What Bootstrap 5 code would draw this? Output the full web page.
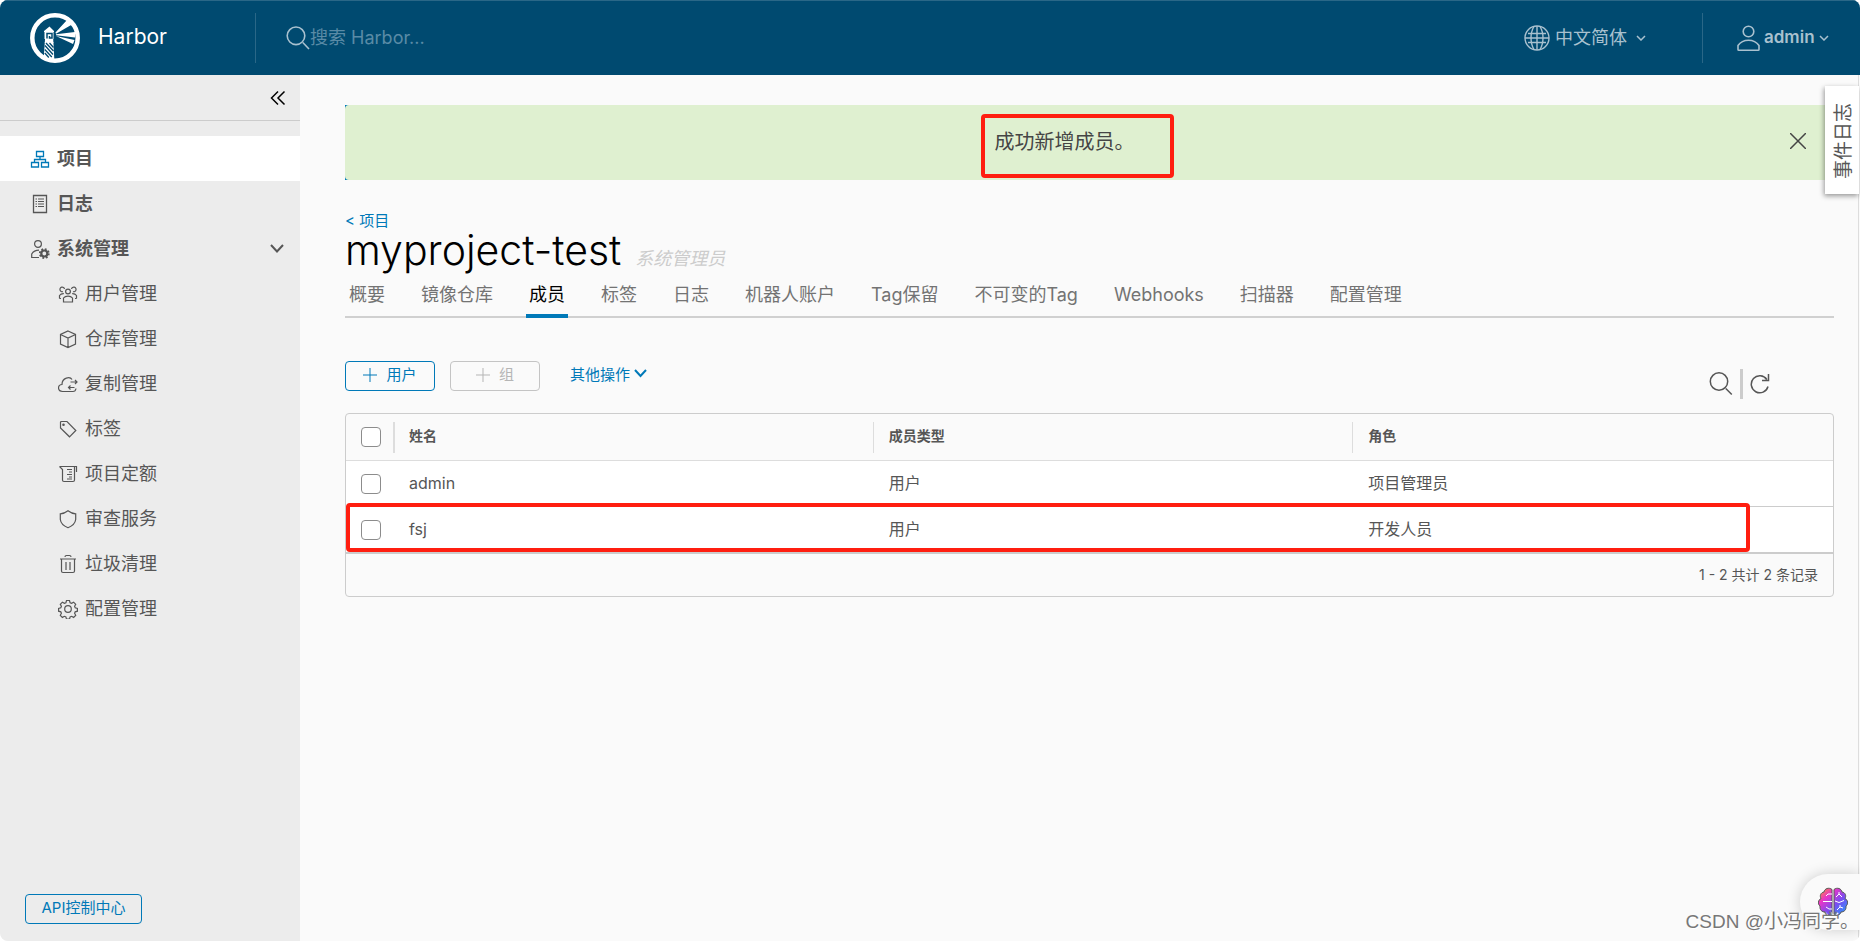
<!DOCTYPE html>
<html lang="zh-CN">
<head>
<meta charset="utf-8">
<meta name="viewport" content="width=device-width, initial-scale=1">
<title>Harbor</title>
<link href="https://cdn.jsdelivr.net/npm/bootstrap@5.3.0/dist/css/bootstrap.min.css" rel="stylesheet">
<style>
  :root { --hb-blue: #0079b8; --hb-navy: #004a70; --hb-text: #565656; --hb-line: #ccc; }
  html { background: #fff; }
  body { font-family: Inter, "Noto Sans CJK SC", sans-serif; font-size: 18px; font-weight: 400; line-height: 24px; color: var(--hb-text); background: transparent; }
  svg { display: block; flex: none; fill: none; stroke: currentColor; }
  button, input { font: inherit; color: inherit; }
  .shell { background: #fafafa; border-radius: 8px; overflow: hidden; }

  .topbar { height: 75px; background: var(--hb-navy); border-top: 1px solid #2a6787; color: #a9c1cf; }
  .brand { width: 255px; padding-left: 30px; gap: 18px; color: #fff; font-size: 21px; }
  .brand:hover { color: #fff; }
  .brand span, .who span { padding-bottom: 2px; }
  .rule { width: 1px; height: 50px; background: #2a6787; }
  .finder { padding-left: 30px; }
  .topbar input { background: none; border: 0; outline: 0; padding: 0; width: 240px; }
  .topbar input::placeholder { color: #5a8ba6; opacity: 1; }
  .plain { background: none; border: 0; padding: 0; }
  .lang { width: 178px; gap: 5px; }
  .who { width: 157px; gap: 4px; padding-left: 34px; font-size: 17px; font-weight: 600; }

  .sidebar { width: 300px; background: #ececec; }
  .fold { height: 46px; margin-bottom: 15px; padding-right: 14px; border-bottom: 1px solid var(--hb-line); color: #000; }
  .side-link { height: 45px; padding-left: 30px; gap: 7px; color: var(--hb-text); text-decoration: none; font-weight: 700; width: 100%; }
  .side-link.sub { padding-left: 58px; font-weight: 400; }
  .side-link.current { background: #fff; }
  .side-link.current svg { color: var(--hb-blue); }
  .side-link span { font-family: "Noto Sans CJK SC", sans-serif; padding-bottom: 3px; }

  .hb-btn { height: 30px; border: 1px solid var(--hb-blue); border-radius: 4px; color: var(--hb-blue); background: transparent; font-size: 15px; line-height: 20px; padding: 0 0 2px; }
  .hb-btn:disabled { color: #b5b5b5; border-color: #c4c4c4; opacity: 1; }
  .wide { width: 90px; gap: 9px; }
  .actions { gap: 15px; }
  .more { margin-left: 15px; gap: 4px; border: 0; }
  .api { width: 117px; margin: 0 25px 17px; }

  .content { padding: 30px 24px 0 45px; border-right: 1px solid #ddd; margin-right: 1px; }
  .notice { height: 75px; background: var(--hb-blue); }
  .notice-in { background: #dff0d0; border-radius: 4px; color: #454545; font-size: 20px; }
  .notice-text { padding-bottom: 2px; }
  .notice-text span { position: relative; }
  .marker { position: absolute; border: 4px solid #ff1e10; border-radius: 4px; pointer-events: none; }
  .notice-text .marker { left: -14px; top: -16px; width: 193px; height: 64px; }
  .close-x { width: 50px; padding: 0 0 4px 6px; }

  .crumb-row { margin-top: 31px; height: 19px; }
  .crumb { color: var(--hb-blue); text-decoration: none; font-size: 15px; line-height: 20px; }
  h1 { font-size: 41px; line-height: 40px; font-weight: 300; color: #000; margin: 0; }
  .title-row { gap: 14px; height: 44px; }
  .role-tag { font-style: italic; color: #ccc; }
  .tabs { gap: 30px; padding-left: 1px; border-bottom: 2px solid #d0d0d0; height: 44px; }
  .tabs a { color: #737373; text-decoration: none; padding: 9px 3px 0; margin-bottom: -2px; border-bottom: 4px solid transparent; white-space: nowrap; }
  .tabs a.current { color: #000; border-color: var(--hb-blue); }

  .toolbar { margin-top: 43px; height: 52px; }
  .tools { padding: 8px 64px 0 0; gap: 7px; }
  .bar { width: 3px; height: 30px; background: #ccc; }

  .grid { border: 1px solid var(--hb-line); border-radius: 4px; }
  .grid table { table-layout: fixed; width: 100%; border-collapse: separate; border-spacing: 0; font-size: 16px; }
  .grid th { height: 47px; padding: 0 0 3px 15px; font-size: 14px; font-weight: 700; border-bottom: 1px solid #ddd; position: relative; }
  .grid td { height: 46px; padding: 0 0 1px 15px; background: #fff; border-bottom: 1px solid var(--hb-line); }
  .grid th + th::before { content: ""; position: absolute; left: -1px; top: 8px; width: 1px; height: 31px; background: #ddd; }
  .grid th:nth-child(2)::before { width: 2px; }
  .grid .pick { width: 48px; padding: 0 0 0 15px; }
  .grid .form-check-input { display: block; width: 20px; height: 20px; margin: 0; border: 1px solid #8c8c8c; border-radius: 4px; background-color: #fff; }
  .row-marker { left: 0; right: 83px; bottom: 44px; height: 49px; }
  .foot { height: 43px; padding-right: 15px; border-top: 1px solid var(--hb-line); font-size: 14px; }

  .event-tab { position: absolute; right: 1px; top: 86px; width: 34px; height: 108px; background: #fff; border: 0; box-shadow: -1px 2px 5px rgba(0,0,0,.4); padding: 2px 0 0 4px; font-size: 19px; }
  .event-tab span { display: block; margin: auto; writing-mode: vertical-rl; text-orientation: sideways; transform: rotate(180deg); }
  .helper { position: absolute; right: 0; bottom: 11px; width: 60px; height: 56px; padding: 0 0 0 18px; border: 0; border-radius: 28px 0 0 28px; background: #fafafa; box-shadow: 0 0 14px rgba(0,0,0,.18); }
  .watermark { position: absolute; right: 1px; bottom: 6px; font: 400 19px/26px "Liberation Sans", "Noto Sans CJK SC", sans-serif; color: #777; text-shadow: 1px 1px 0 #fff; pointer-events: none; white-space: nowrap; }
</style>
</head>
<body>
<div class="shell position-relative d-flex flex-column min-vh-100">
  <header class="topbar d-flex align-items-center">
    <a class="brand d-flex align-items-center text-decoration-none" href="#">
      <svg width="50" height="50" viewBox="0 0 50 50">
        <circle cx="25" cy="25" r="22.700" stroke="#fff" stroke-width="4.500"/>
        <g fill="#fff" stroke="none">
          <path d="M19.500 13.500 24 18v1h-.5v7h-.3l.2 4h-8.600l.2-4h-.5v-7H14v-1z"/>
          <path d="M14.800 29h8.600l1 18.800-10.600-3.500z"/>
          <path d="M25.500 19.500 37 7l5 4.500L26 20.800zM26 21.300 45 19v5.500l-19-2.300zM26 23 44.500 27l-1.500 4z"/>
        </g>
        <path d="M17 25.500v-5h5v4.500h-2.500v-2" stroke="#004a70" stroke-width="1.500"/>
        <path d="m15 32.500 8 9M14.800 36.500l7 7.500M16 30l7.500 8M14.800 40l4 4.500M19.500 30l4 4.500" stroke="#004a70" stroke-width="1.300"/>
      </svg>
      <span>Harbor</span>
    </a>
    <div class="rule"></div>
    <label class="finder d-flex align-items-center me-auto">
      <svg width="24" height="24" viewBox="0 0 24 24" stroke-width="1.600"><circle cx="10" cy="9.800" r="8.800"/><path d="m16.800 16.500 6.200 6.500"/></svg>
      <input type="text" placeholder="搜索 Harbor..." aria-label="搜索 Harbor">
    </label>
    <button class="plain lang d-flex align-items-center">
      <svg width="26" height="26" viewBox="0 0 26 26" stroke-width="1.400"><circle cx="13" cy="13" r="12"/><path d="M13 1v24M1 13h24M4 8.500h18M4 17.500h18M10 1.500C6 8 6 18 10 24.500M16 1.500c4 6.500 4 16.500 0 23"/></svg>
      <span>中文简体</span>
      <svg class="ms-1" width="10" height="6" viewBox="0 0 10 6" stroke-width="1.500"><path d="m1 1 4 4 4-4"/></svg>
    </button>
    <div class="rule"></div>
    <button class="plain who d-flex align-items-center">
      <svg width="23" height="26" viewBox="0 0 23 26" stroke-width="1.600"><circle cx="11.500" cy="6.500" r="5.300"/><path d="M1 24.500v-4c2.500-3.600 6.500-5.300 10.500-5.300s8 1.700 10.500 5.300v4q0 .7-.8.7H1.800q-.8 0-.8-.7z"/></svg>
      <span>admin</span>
      <svg width="10" height="6" viewBox="0 0 10 6" stroke-width="1.500"><path d="m1 1 4 4 4-4"/></svg>
    </button>
  </header>

  <div class="d-flex flex-grow-1">
    <nav class="sidebar d-flex flex-column flex-shrink-0">
      <div class="fold d-flex align-items-center justify-content-end">
        <button class="plain" aria-label="收起">
          <svg width="16" height="16" viewBox="0 0 16 16" stroke-width="1.500"><path d="M8 1.500 1.500 8 8 14.500M14.500 1.500 8 8l6.500 6.500"/></svg>
        </button>
      </div>
      <a class="side-link current d-flex align-items-center" href="#">
        <svg width="20" height="20" viewBox="0 0 20 20" stroke-width="1.300"><path d="M6.500 2.500h7v5h-7zM1.500 13.500h7v4.500h-7zM11.500 13.500h7v4.500h-7zM10 7.500V10M4.500 13v-2.500h11V13"/></svg>
        <span>项目</span></a>
      <a class="side-link d-flex align-items-center" href="#">
        <svg width="20" height="20" viewBox="0 0 20 20" stroke-width="1.300"><path d="M3.500 1.500h13v17h-13z"/><path d="M8 5h6M8 7.500h6M8 10h6M8 12.500h6M5.500 5H7M5.500 7.500H7M5.500 10H7M5.500 12.500H7" stroke-width="1"/></svg>
        <span>日志</span></a>
      <button class="plain side-link d-flex align-items-center" aria-expanded="true">
        <svg width="20" height="20" viewBox="0 0 20 20" stroke-width="1.200"><circle cx="8" cy="5" r="3.400"/><path d="M9 18.500H1.700V15c1.500-2.500 4-3.800 7.300-3.800"/><circle cx="14.300" cy="14.500" r="3" stroke-width="2.200"/><circle cx="14.300" cy="14.500" r="4.500" stroke-width="1.800" stroke-dasharray="1.800 1.734"/></svg>
        <span>系统管理</span>
        <svg class="ms-auto me-3" width="14" height="9" viewBox="0 0 14 9" stroke-width="2"><path d="m1 1 6 6.500L13 1"/></svg>
      </button>
      <a class="side-link sub d-flex align-items-center" href="#">
        <svg width="20" height="20" viewBox="0 0 20 20" stroke-width="1.200"><circle cx="10" cy="7.500" r="2.400"/><path d="M5.500 18v-4c2-2.600 7-2.600 9 0v4zM6.500 5A2.300 2.300 0 1 0 5 7.600M13.500 5A2.300 2.300 0 1 1 15 7.600M1.500 14.500v-3Q3 9.500 5.800 9.700M18.500 14.500v-3Q17 9.500 14.200 9.700M1.500 14.500H3M18.500 14.500H17"/></svg>
        <span>用户管理</span></a>
      <a class="side-link sub d-flex align-items-center" href="#">
        <svg width="20" height="20" viewBox="0 0 20 20" stroke-width="1.200"><path d="M10 2 17.500 5.500v9.500L10 18.500 2.500 15V5.500zM2.500 5.500 10 9l7.500-3.500M10 9v9.500"/></svg>
        <span>仓库管理</span></a>
      <a class="side-link sub d-flex align-items-center" href="#">
        <svg width="20" height="20" viewBox="0 0 20 20" stroke-width="1.200"><path d="M18 14.500q-.5 3-3 3H4.500C-.7 17-.7 11 4 10.500 4 3.500 12 2 14 5.500"/><path d="M12.500 8H19M17 6l2 2-2 2M16.500 13.500H10.500M12.500 11.500l-2 2 2 2"/></svg>
        <span>复制管理</span></a>
      <a class="side-link sub d-flex align-items-center" href="#">
        <svg width="20" height="20" viewBox="0 0 20 20" stroke-width="1.200"><path d="M2.500 3.500q0-1 1-1H9l8.800 9-6.300 6.300L2.500 9z"/><circle cx="5.500" cy="5.700" r=".7"/></svg>
        <span>标签</span></a>
      <a class="side-link sub d-flex align-items-center" href="#">
        <svg width="20" height="20" viewBox="0 0 20 20" stroke-width="1.200"><path d="M1.500 2.500H18.500V8M1.500 2.500 4.500 5.500V16q0 1.500 1.500 1.500h9q1.500 0 1.500-1.500V3M14 5.500H9M14 8H11M14 10.500H9M14 13H11M14 15H9"/></svg>
        <span>项目定额</span></a>
      <a class="side-link sub d-flex align-items-center" href="#">
        <svg width="20" height="20" viewBox="0 0 20 20" stroke-width="1.200"><path d="M10 1.700Q13.500 4.500 17.700 4.800v5.700Q17 16 10 18.700 3 16 2.300 10.500V4.800Q6.500 4.500 10 1.700z"/></svg>
        <span>审查服务</span></a>
      <a class="side-link sub d-flex align-items-center" href="#">
        <svg width="20" height="20" viewBox="0 0 20 20" stroke-width="1.200"><path d="M2 5h16M3.500 5v12q0 1.500 1.500 1.500h10q1.500 0 1.500-1.500V5M8 8v8M12 8v8M7 3q0-1.500 1.500-1.500h3Q13 1.500 13 3"/></svg>
        <span>垃圾清理</span></a>
      <a class="side-link sub d-flex align-items-center" href="#">
        <svg width="20" height="20" viewBox="0 0 20 20" stroke-width="1.200"><circle cx="10" cy="10" r="3.300"/><path d="M8.500 1.500h3l.6 2.200 1.500.6 2-1.100 2.100 2.100-1.100 2 .6 1.500 2.200.6v2.800l-2.200.6-.6 1.500 1.100 2-2.100 2.100-2-1.100-1.500.6-.6 2.200h-3l-.6-2.200-1.500-.6-2 1.100-2.100-2.100 1.100-2-.6-1.500-2.200-.6V9.400l2.200-.6.6-1.500-1.100-2 2.100-2.100 2 1.100 1.500-.6z"/></svg>
        <span>配置管理</span></a>
      <button class="hb-btn api mt-auto">API控制中心</button>
    </nav>

    <main class="content flex-grow-1">
      <div class="notice">
        <div class="notice-in h-100 d-flex align-items-center" role="alert">
          <div class="notice-text flex-grow-1 text-center"><span>成功新增成员。<i class="marker"></i></span></div>
          <button class="plain close-x" aria-label="关闭"><svg width="16" height="16" viewBox="0 0 16 16" stroke-width="1.500"><path d="m0 0 16 16M16 0 0 16"/></svg></button>
        </div>
      </div>

      <div class="crumb-row d-flex"><a class="crumb" href="#">&lt; 项目</a></div>
      <div class="title-row d-flex align-items-baseline">
        <h1>myproject-test</h1><span class="role-tag">系统管理员</span>
      </div>
      <nav class="tabs d-flex">
        <a href="#">概要</a><a href="#">镜像仓库</a><a class="current" href="#">成员</a><a href="#">标签</a><a href="#">日志</a><a href="#">机器人账户</a><a href="#">Tag保留</a><a href="#">不可变的Tag</a><a href="#">Webhooks</a><a href="#">扫描器</a><a href="#">配置管理</a>
      </nav>

      <div class="toolbar d-flex align-items-start">
        <div class="actions d-flex">
          <button class="hb-btn wide d-flex align-items-center justify-content-center"><svg width="14" height="14" viewBox="0 0 14 14"><path d="M7 0v14M0 7h14"/></svg>用户</button>
          <button class="hb-btn wide d-flex align-items-center justify-content-center" disabled><svg width="14" height="14" viewBox="0 0 14 14"><path d="M7 0v14M0 7h14"/></svg>组</button>
          <button class="hb-btn more d-flex align-items-center">其他操作<svg class="mb-1" width="13" height="9" viewBox="0 0 13 9" stroke-width="2"><path d="m1 1 5.500 6L12 1"/></svg></button>
        </div>
        <div class="tools d-flex align-items-center ms-auto">
          <button class="plain" aria-label="搜索"><svg width="24" height="24" viewBox="0 0 24 24" stroke-width="1.500"><circle cx="10" cy="9.500" r="8.700"/><path d="m16.800 16.500 6 6"/></svg></button>
          <div class="bar"></div>
          <button class="plain" aria-label="刷新"><svg width="20" height="20" viewBox="0 0 20 20" stroke-width="1.500"><path d="M18 12.500A8.500 8.500 0 1 1 16.800 5.500M18.500 0v6.500H12"/></svg></button>
        </div>
      </div>

      <div class="grid position-relative d-block">
        <table>
          <thead><tr><th class="pick"><input class="form-check-input" type="checkbox" aria-label="全选"></th><th>姓名</th><th>成员类型</th><th>角色</th></tr></thead>
          <tbody>
            <tr><td class="pick"><input class="form-check-input" type="checkbox" aria-label="admin"></td><td>admin</td><td>用户</td><td>项目管理员</td></tr>
            <tr><td class="pick"><input class="form-check-input" type="checkbox" aria-label="fsj"></td><td>fsj</td><td>用户</td><td>开发人员</td></tr>
          </tbody>
        </table>
        <div class="foot d-flex align-items-center justify-content-end">1 - 2 共计 2 条记录</div>
        <i class="marker row-marker"></i>
      </div>
    </main>
  </div>

  <button class="event-tab"><span>事件日志</span></button>
  <button class="helper" aria-label="助手">
    <svg width="30" height="30" viewBox="0 0 30 30" stroke="none">
      <defs><linearGradient id="brain" x1="0" y1="0" x2="1" y2="1"><stop offset="0" stop-color="#ff9d1c"/><stop offset=".3" stop-color="#e935c8"/><stop offset=".6" stop-color="#7a4df0"/><stop offset="1" stop-color="#1aa4ff"/></linearGradient></defs>
      <path fill="url(#brain)" d="M14 2.500C11 0 6.500 1.500 6 5 2.500 5.500 1.500 9 3 11.500 0 13-.5 17 2 19c-.5 4 2 6 5 6 1 3.500 4.500 4 7 2zM16 2.500C19 0 23.500 1.500 24 5c3.500.5 4.500 4 3 6.500 3 1.500 3.500 5.500 1 7.500.5 4-2 6-5 6-1 3.500-4.500 4-7 2z"/>
      <path stroke="#fff" d="M14 7h-4L8 9M14 14.500H5M14 22h-3l-3-2M18 10l3-3 3 3M17 14l4 1.500 5-2M19 23l3-3 3 1M21 7V5M22 20v-2"/>
    </svg>
  </button>
  <div class="watermark">CSDN @小冯同学。</div>
</div>
<script src="https://cdn.jsdelivr.net/npm/bootstrap@5.3.0/dist/js/bootstrap.bundle.min.js"></script>
</body>
</html>
